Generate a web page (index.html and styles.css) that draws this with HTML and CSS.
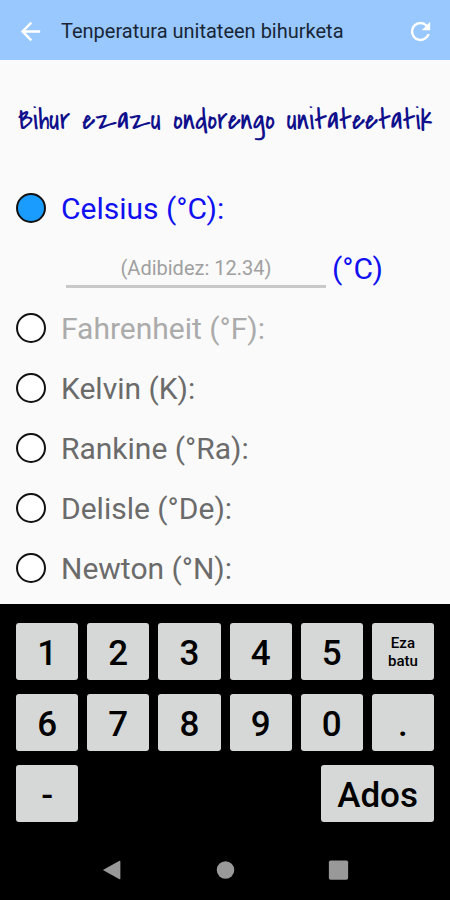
FILE: index.html
```html
<!DOCTYPE html>
<html lang="eu">
<head>
<meta charset="utf-8">
<meta name="viewport" content="width=device-width, initial-scale=1">
<title>Tenperatura unitateen bihurketa</title>
<link rel="stylesheet" href="styles.css">
</head>
<body>
<header class="app-bar">
  <button class="icon-button" type="button" aria-label="Atzera">
    <svg class="icon" viewBox="0 0 24 24"><path d="M20 11H7.83l5.59-5.59L12 4l-8 8 8 8 1.41-1.41L7.83 13H20v-2z"/></svg>
  </button>
  <p class="app-title">Tenperatura unitateen bihurketa</p>
  <button class="icon-button" type="button" aria-label="Berrezarri">
    <svg class="icon" viewBox="0 0 24 24"><path d="M17.65 6.35A7.958 7.958 0 0 0 12 4a8 8 0 1 0 7.73 10h-2.08A6 6 0 1 1 12 6c1.66 0 3.14.69 4.22 1.78L13 11h7V4l-2.35 2.35z"/></svg>
  </button>
</header>
<main class="content">
  <h1 class="heading">Bihur ezazu ondorengo unitateetatik</h1>
  <form class="units">
    <label class="unit unit-active"><input class="radio" type="radio" name="unit" checked><span>Celsius (°C):</span></label>
    <div class="entry">
      <input class="value" id="value" type="text" inputmode="none" placeholder="(Adibidez: 12.34)">
      <label class="suffix" for="value">(°C)</label>
    </div>
    <label class="unit unit-muted"><input class="radio" type="radio" name="unit"><span>Fahrenheit (°F):</span></label>
    <label class="unit"><input class="radio" type="radio" name="unit"><span>Kelvin (K):</span></label>
    <label class="unit"><input class="radio" type="radio" name="unit"><span>Rankine (°Ra):</span></label>
    <label class="unit"><input class="radio" type="radio" name="unit"><span>Delisle (°De):</span></label>
    <label class="unit"><input class="radio" type="radio" name="unit"><span>Newton (°N):</span></label>
  </form>
</main>
<section class="keyboard">
  <div class="keys">
    <button class="key" type="button">1</button>
    <button class="key" type="button">2</button>
    <button class="key" type="button">3</button>
    <button class="key" type="button">4</button>
    <button class="key" type="button">5</button>
    <button class="key key-small" type="button">Eza batu</button>
    <button class="key" type="button">6</button>
    <button class="key" type="button">7</button>
    <button class="key" type="button">8</button>
    <button class="key" type="button">9</button>
    <button class="key" type="button">0</button>
    <button class="key" type="button">.</button>
    <button class="key" type="button">-</button>
    <button class="key key-done" type="button">Ados</button>
  </div>
</section>
<nav class="system-bar">
  <button class="system-button" type="button" aria-label="Atzera"><svg class="system-icon" viewBox="0 0 24 24"><path d="M1 12 20 1.500Q21 1 21 2.500V21.500Q21 23 20 22.500Z"/></svg></button>
  <button class="system-button" type="button" aria-label="Hasiera"><svg class="system-icon" viewBox="0 0 24 24"><circle cx="12" cy="12" r="10"/></svg></button>
  <button class="system-button" type="button" aria-label="Azkenak"><svg class="system-icon" viewBox="0 0 24 24"><rect x="1" y="1" width="22" height="22" rx="2"/></svg></button>
</nav>
</body>
</html>
```

FILE: styles.css
```css
* {
  box-sizing: border-box;
}

body {
  margin: 0;
  min-height: 100vh;
  display: flex;
  flex-direction: column;
  background: #fafafa;
  color: #6b6b6b;
  font-family: Roboto, "Liberation Sans", sans-serif;
}

button,
input {
  font: inherit;
}

.app-bar {
  display: flex;
  align-items: center;
  gap: 16px;
  height: 60px;
  padding: 2px 15px 0 16px;
  background: #99c8ff;
}

.icon-button,
.system-button {
  display: flex;
  padding: 0;
  border: 0;
  background: none;
}

.icon {
  width: 29px;
  height: 29px;
  fill: #fff;
}

.app-title {
  flex: 1;
  margin: 0;
  color: #182636;
  font-size: 20px;
}

.content {
  flex: 1;
  padding-bottom: 6px;
}

.heading {
  margin: 0;
  padding: 2px 16px 0;
  color: #10108c;
  font-family: "Covered By Your Grace", "Reenie Beanie", Lato, sans-serif;
  font-size: 30px;
  font-weight: 400;
  line-height: 116px;
  text-align: center;
  white-space: nowrap;
}

.unit,
.entry {
  display: flex;
  align-items: center;
  height: 60px;
  font-size: 30px;
}

.unit {
  gap: 15px;
  padding: 0 16px;
}

.unit-active,
.suffix {
  color: #1010f0;
}

.unit-muted {
  color: #ababab;
}

.radio {
  appearance: none;
  width: 30px;
  height: 30px;
  margin: 0;
  border: 2px solid #111;
  border-radius: 50%;
  background: #fff;
}

.radio:checked {
  background: #1a9cff;
}

.entry {
  gap: 6px;
  padding: 0 67px 0 66px;
}

.value {
  flex: 1;
  min-width: 0;
  height: 40px;
  padding: 2px 0 0;
  border: 0;
  border-bottom: 3px solid #c8c8c8;
  background: none;
  color: #6b6b6b;
  font-size: 20px;
  text-align: center;
  outline: 0;
}

.value::placeholder {
  color: #a0a0a0;
}

.keyboard {
  padding: 19px 16px 18px;
  background: #000;
}

.keys {
  display: grid;
  grid-template-columns: repeat(6, 1fr);
  grid-auto-rows: 57px;
  gap: 14px 9px;
}

.key {
  min-width: 0;
  padding: 4px 0 0;
  border: 0;
  border-radius: 3px;
  background: #d6d8d7;
  color: #000;
  font-size: 35px;
  font-weight: 500;
}

.key-small {
  padding: 0 12px;
  font-size: 15px;
  line-height: 18px;
}

.key-done {
  grid-column: 5 / 7;
  justify-self: end;
  padding: 4px 16px 0;
}

.system-bar {
  display: flex;
  justify-content: center;
  gap: 92px;
  padding: 19px 0;
  background: #000;
}

.system-icon {
  width: 21px;
  height: 22px;
  fill: #999;
}
```
